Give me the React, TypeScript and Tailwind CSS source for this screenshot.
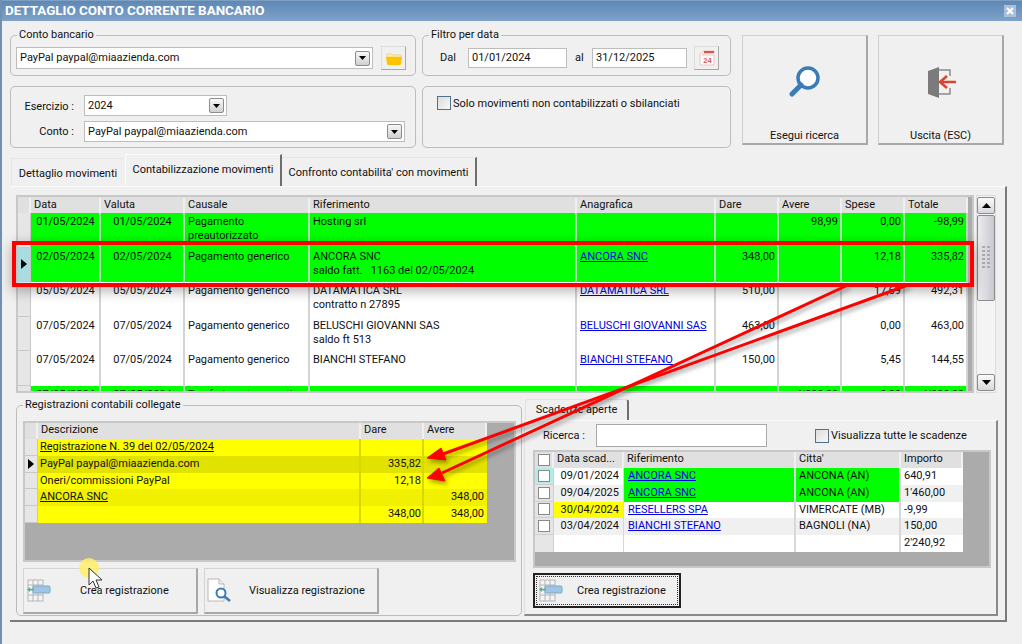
import React from "react";

type MainRow = {
  data: string;
  valuta: string;
  causale: string;
  rif: string[];
  ana?: string;
  dare?: string;
  avere?: string;
  spese?: string;
  totale?: string;
  green?: boolean;
  selected?: boolean;
};

const mainRows: MainRow[] = [
  { data: "01/05/2024", valuta: "01/05/2024", causale: "Pagamento preautorizzato", rif: ["Hosting srl"], avere: "98,99", spese: "0,00", totale: "-98,99", green: true },
  { data: "02/05/2024", valuta: "02/05/2024", causale: "Pagamento generico", rif: ["ANCORA SNC", "saldo fatt.   1163 del 02/05/2024"], ana: "ANCORA SNC", dare: "348,00", spese: "12,18", totale: "335,82", green: true, selected: true },
  { data: "05/05/2024", valuta: "05/05/2024", causale: "Pagamento generico", rif: ["DATAMATICA SRL", "contratto n 27895"], ana: "DATAMATICA SRL", dare: "510,00", spese: "17,69", totale: "492,31" },
  { data: "07/05/2024", valuta: "07/05/2024", causale: "Pagamento generico", rif: ["BELUSCHI GIOVANNI SAS", "saldo ft 513"], ana: "BELUSCHI GIOVANNI SAS", dare: "463,00", spese: "0,00", totale: "463,00" },
  { data: "07/05/2024", valuta: "07/05/2024", causale: "Pagamento generico", rif: ["BIANCHI STEFANO"], ana: "BIANCHI STEFANO", dare: "150,00", spese: "5,45", totale: "144,55" },
  { data: "07/05/2024", valuta: "07/05/2024", causale: "Trasferimento a conti", rif: [""], avere: "1'000,00", spese: "0,00", totale: "1'000,00", green: true },
];

const regRows = [
  { d: "Registrazione N. 39 del 02/05/2024", u: true, bg: "bg-[#ffff00]" },
  { d: "PayPal paypal@miaazienda.com", dare: "335,82", bg: "bg-[#e2e200]", sel: true },
  { d: "Oneri/commissioni PayPal", dare: "12,18", bg: "bg-[#ffff00]" },
  { d: "ANCORA SNC", u: true, avere: "348,00", bg: "bg-[#f0f000]" },
  { d: "", dare: "348,00", avere: "348,00", bg: "bg-[#ffff00]" },
];

const scadRows = [
  { data: "09/01/2024", rif: "ANCORA SNC", citta: "ANCONA (AN)", imp: "640,91", bg: "bg-white", dateBg: "bg-white", green: true, ind: "bg-[#b4ecec]" },
  { data: "09/04/2025", rif: "ANCORA SNC", citta: "ANCONA (AN)", imp: "1'460,00", bg: "bg-[#f0f0f0]", dateBg: "bg-[#f0f0f0]", green: true, ind: "bg-[#e4e4e4]" },
  { data: "30/04/2024", rif: "RESELLERS SPA", citta: "VIMERCATE (MB)", imp: "-9,99", bg: "bg-white", dateBg: "bg-[#ffff00]", green: false, ind: "bg-[#e4e4e4]" },
  { data: "03/04/2024", rif: "BIANCHI STEFANO", citta: "BAGNOLI (NA)", imp: "150,00", bg: "bg-[#f0f0f0]", dateBg: "bg-[#f0f0f0]", green: false, ind: "bg-[#e4e4e4]" },
];

const DropArrow = () => (
  <span className="flex h-[15px] w-[15px] shrink-0 items-center justify-center rounded-[2px] border border-[#8c8c8c] bg-gradient-to-b from-[#f8f8f8] to-[#d0d0d4]">
    <svg width="7" height="4" viewBox="0 0 7 4"><path d="M0 0h7L3.5 4z" fill="#000" /></svg>
  </span>
);

const Combo = ({ text, className }: { text: string; className: string }) => (
  <div className={`flex items-center justify-between border border-[#bdbdbd] bg-white pl-[3px] pr-[2px] ${className}`}>
    <span>{text}</span>
    <DropArrow />
  </div>
);

const Check = ({ className = "" }: { className?: string }) => (
  <span className={`block h-[12px] w-[12px] border border-[#8a8a8a] bg-white ${className}`} />
);

const BlueCheck = () => (
  <span className="block h-[14px] w-[14px] shrink-0 border border-[#54718c] bg-gradient-to-br from-[#dcdcdc] to-[#f8f8f8]" />
);

const Grid24 = () => (
  <svg width="25" height="24" viewBox="0 0 25 24" className="shrink-0">
    <rect x="1" y="1" width="15" height="21" fill="#f4f4f4" stroke="#b5b5b5" />
    <path d="M1 6h15M1 11h15M1 16h15M6 1v21M11 1v21" stroke="#b5b5b5" />
    <rect x="6" y="7" width="17" height="7" rx="1" fill="#9cc6e4" stroke="#7fa9c8" />
    <path d="M1 10.5h6" stroke="#5bb08a" strokeWidth="1.5" />
    <path d="M0 10.5l3-2.5v5z" fill="#5bb08a" />
  </svg>
);

const DocLens = () => (
  <svg width="25" height="25" viewBox="0 0 25 25" className="shrink-0">
    <path d="M1 1h11l5 5v17H1z" fill="#fff" stroke="#b8b8b8" />
    <path d="M12 1v5h5" fill="#eee" stroke="#b8b8b8" />
    <circle cx="14" cy="15" r="4.5" fill="#fff" stroke="#3a7cb6" strokeWidth="2" />
    <path d="M17.5 18.5L23 23" stroke="#3a7cb6" strokeWidth="2.5" />
  </svg>
);

const Group = ({ label, className, inner, children }: { label: string; className: string; inner?: string; children: React.ReactNode }) => (
  <fieldset className={`rounded-[5px] border border-[#bcbcbc] ${className}`}>
    <legend className="ml-[6px] px-[2px] leading-[14px]">{label}</legend>
    <div className={inner}>{children}</div>
  </fieldset>
);

const Box = ({ className, children }: { className: string; children?: React.ReactNode }) => (
  <div className={`rounded-[5px] border border-[#bcbcbc] ${className}`}>{children}</div>
);

const HCell = ({ children }: { children?: React.ReactNode }) => (
  <div className="truncate border-r-2 border-[#f0f0f0] pl-[3px]">{children}</div>
);

const MainCell = ({ green, right, children }: { green?: boolean; right?: boolean; children?: React.ReactNode }) => (
  <div className={`overflow-hidden whitespace-nowrap border-r-2 pl-[3px] pr-[2px] pt-[2px] ${green ? "border-[#b4dcb4] bg-[#00ff00]" : "border-[#d4d4d4] bg-white"} ${right ? "text-right" : ""}`}>
    {children}
  </div>
);

const Link = ({ children }: { children: React.ReactNode }) => (
  <span className="text-[#0000e0] underline">{children}</span>
);

export default function App() {
  return (
    <div className="relative h-[644px] w-[1022px] overflow-hidden border-l-2 border-[#6f8fb3] bg-[#f0f0f0] font-['Roboto',sans-serif] text-[11px] leading-[14px] text-[#111]">
      {/* title bar */}
      <div className="-ml-[2px] flex h-[21px] items-center justify-between border-t border-[#7f9fc0] bg-gradient-to-b from-[#5e88b6] to-[#7fa2c8] pl-[5px] pr-[6px]">
        <span className="text-[13.4px] font-bold text-white">DETTAGLIO CONTO CORRENTE BANCARIO</span>
        <span className="flex h-[12px] w-[12px] items-center justify-center bg-[#a9c0da]">
          <svg width="8" height="8" viewBox="0 0 8 8"><path d="M1 1l6 6M7 1L1 7" stroke="#fff" strokeWidth="2" /></svg>
        </span>
      </div>

      {/* top filters */}
      <div className="flex h-[133px] pl-[8px] pt-[7px]">
        <div className="flex w-[406px] flex-col gap-[10px]">
          <Group label="Conto bancario" className="h-[48px]" inner="flex h-[32px] items-center pl-[5px]">
            <Combo text="PayPal paypal@miaazienda.com" className="h-[22px] w-[357px]" />
            <button className="ml-[8px] flex h-[24px] w-[25px] items-center justify-center border border-[#dcdcdc] border-b-[#a8a8a8] border-r-[#a8a8a8]">
              <svg width="16" height="13" viewBox="0 0 16 13">
                <path d="M1 3a1 1 0 011-1h4l1 1h7a1 1 0 011 1v1H1z" fill="#fff2b0" stroke="#f0c040" strokeWidth=".6" />
                <path d="M0 5h16l-1 7a1 1 0 01-1 1H2a1 1 0 01-1-1z" fill="#ffc400" />
              </svg>
            </button>
          </Group>
          <Box className="flex h-[62px] flex-col gap-[5px] pt-[8px]">
            <div className="flex items-center">
              <span className="mr-[10px] w-[63px] pt-[2px] text-right">Esercizio :</span>
              <Combo text="2024" className="h-[21px] w-[143px]" />
            </div>
            <div className="flex items-center">
              <span className="mr-[10px] w-[63px] text-right">Conto :</span>
              <Combo text="PayPal paypal@miaazienda.com" className="h-[21px] w-[321px]" />
            </div>
          </Box>
        </div>

        <div className="ml-[6px] flex w-[309px] flex-col gap-[10px]">
          <Group label="Filtro per data" className="h-[48px]" inner="flex h-[32px] items-center pl-[17px]">
            <span className="w-[28px]">Dal</span>
            <div className="flex h-[20px] w-[99px] items-center border border-[#bdbdbd] bg-white pl-[3px]">01/01/2024</div>
            <span className="ml-[8px] w-[17px]">al</span>
            <div className="flex h-[20px] w-[95px] items-center border border-[#bdbdbd] bg-white pl-[3px]">31/12/2025</div>
            <button className="ml-[7px] flex h-[24px] w-[25px] items-center justify-center border border-[#dcdcdc] border-b-[#a8a8a8] border-r-[#a8a8a8]">
              <svg width="16" height="16" viewBox="0 0 16 16">
                <path d="M1 15V4l4-3h10v2H6L3 5h12v10z" fill="#fff" stroke="#e8b0a8" strokeWidth=".7" />
                <path d="M5 1h10v2H5z" fill="#d9534a" />
                <text x="8.5" y="13" fontSize="7.5" fontWeight="700" textAnchor="middle" fill="#e0564c" fontFamily="Liberation Sans, sans-serif">24</text>
              </svg>
            </button>
          </Group>
          <Box className="flex h-[62px] items-start pl-[14px] pt-[9px]">
            <BlueCheck />
            <span className="ml-[2px] pt-[1px]">Solo movimenti non contabilizzati o sbilanciati</span>
          </Box>
        </div>

        <button className="ml-[11px] mt-[7px] flex h-[110px] w-[126px] flex-col items-center justify-between border border-[#cfcfcf] border-b-2 border-r-2 border-b-[#a8a8a8] border-r-[#a8a8a8] pt-[29px]">
          <svg width="32" height="32" viewBox="0 0 32 32">
            <circle cx="19" cy="13" r="10" fill="#fff" stroke="#3a7cb6" strokeWidth="3.5" />
            <path d="M12 20L3 29" stroke="#3a7cb6" strokeWidth="5" strokeLinecap="round" />
          </svg>
          <span>Esegui ricerca</span>
        </button>
        <button className="ml-[10px] mt-[7px] flex h-[110px] w-[126px] flex-col items-center justify-between border border-[#cfcfcf] border-b-2 border-r-2 border-b-[#a8a8a8] border-r-[#a8a8a8] pt-[30px]">
          <svg width="30" height="33" viewBox="0 0 30 33" className="ml-[2px]">
            <path d="M10 4h13v6M23 22v6H10" fill="none" stroke="#8a8a8a" strokeWidth="1.5" />
            <path d="M1 5l11-4v31L1 28z" fill="#7b7b7b" />
            <path d="M15 16h14" stroke="#d9442e" strokeWidth="2.5" />
            <path d="M20 10l-7 6 7 6" fill="none" stroke="#d9442e" strokeWidth="2.5" />
          </svg>
          <span>Uscita (ESC)</span>
        </button>
      </div>

      {/* tabs */}
      <div className="ml-[9px] flex h-[32px] items-end whitespace-nowrap">
        <div className="flex h-[28px] w-[113px] items-center justify-center border-l border-t border-[#e6e6e6] pt-[2px]">Dettaglio movimenti</div>
        <div className="ml-[1px] flex h-[32px] w-[157px] items-center justify-center border-l border-r-2 border-t border-[#fafafa] border-r-[#6e6e6e] pb-[1px]">Contabilizzazione movimenti</div>
        <div className="flex h-[29px] w-[195px] items-center justify-center border-r-2 border-t border-[#e6e6e6] border-r-[#6e6e6e] pt-[1px]">Confronto contabilita' con movimenti</div>
      </div>

      {/* main panel */}
      <div className="ml-[8px] h-[436px] w-[997px] border-b-2 border-r-2 border-t border-b-[#7a7a7a] border-r-[#7a7a7a] border-t-[#fafafa] pl-[6px] pt-[8px]">
        <div className="flex h-[198px]">
          <div className="h-[198px] w-[958px] overflow-hidden border-2 border-[#c8c8c8] bg-[#ababab]">
            <div className="grid h-[16px] w-[950px] grid-cols-[13px_70px_84px_125px_267px_139px_63px_63px_63px_63px] bg-[#e0e0e0] pt-[1px]">
              <HCell />
              <HCell>Data</HCell>
              <HCell>Valuta</HCell>
              <HCell>Causale</HCell>
              <HCell>Riferimento</HCell>
              <HCell>Anagrafica</HCell>
              <HCell>Dare</HCell>
              <HCell>Avere</HCell>
              <HCell>Spese</HCell>
              <HCell>Totale</HCell>
            </div>
            {mainRows.map((r, i) => (
              <div key={i} className="grid h-[34.5px] w-[950px] grid-cols-[13px_70px_84px_125px_267px_139px_63px_63px_63px_63px]">
                <div className={`flex items-center justify-center border-b border-r border-[#c8c8c8] ${r.selected ? "bg-[#a8dce0]" : "bg-[#e6e6e6]"}`}>
                  {r.selected && <svg width="6" height="10" viewBox="0 0 6 10"><path d="M0 0l6 5-6 5z" fill="#000" /></svg>}
                </div>
                <MainCell green={r.green}><div className="text-center">{r.data}</div></MainCell>
                <MainCell green={r.green}><div className="text-center">{r.valuta}</div></MainCell>
                <MainCell green={r.green}><div className="whitespace-normal">{r.causale}</div></MainCell>
                <MainCell green={r.green}>
                  <div className="whitespace-pre">{r.rif.join("\n")}</div>
                </MainCell>
                <MainCell green={r.green}>{r.ana && <Link>{r.ana}</Link>}</MainCell>
                <MainCell green={r.green} right>{r.dare}</MainCell>
                <MainCell green={r.green} right>{r.avere}</MainCell>
                <MainCell green={r.green} right>{r.spese}</MainCell>
                <MainCell green={r.green} right>{r.totale}</MainCell>
              </div>
            ))}
          </div>
          {/* scrollbar */}
          <div className="ml-[2px] flex h-[198px] w-[20px] flex-col border border-[#dcdcdc] bg-[#f4f4f4] py-[1px]">
            <div className="flex h-[17px] shrink-0 items-center justify-center rounded-[2px] border border-[#8c8c8c] bg-gradient-to-b from-[#fafafa] to-[#d8d8dc]">
              <svg width="9" height="5" viewBox="0 0 9 5"><path d="M4.5 0L9 5H0z" fill="#000" /></svg>
            </div>
            <div className="mt-[1px] flex h-[86px] shrink-0 items-center justify-center rounded-[2px] border border-[#8c8c8c] bg-gradient-to-r from-[#ececf0] to-[#c8c8d0]">
              <svg width="8" height="24" viewBox="0 0 8 24">
                {[1, 5, 9, 13, 17, 21].map((y) => (
                  <path key={y} d={`M0 ${y}h3M5 ${y}h3`} stroke="#9c9ca4" strokeWidth="1.5" />
                ))}
              </svg>
            </div>
            <div className="flex-1" />
            <div className="flex h-[17px] shrink-0 items-center justify-center rounded-[2px] border border-[#8c8c8c] bg-gradient-to-b from-[#fafafa] to-[#d8d8dc]">
              <svg width="9" height="5" viewBox="0 0 9 5"><path d="M0 0h9L4.5 5z" fill="#000" /></svg>
            </div>
          </div>
        </div>

        <div className="mt-[5px] flex">
          {/* registrazioni */}
          <Group label="Registrazioni contabili collegate" className="h-[218px] w-[506px]" inner="pl-[6px]">
            <div className="mt-[9px] h-[141px] w-[493px] border-2 border-[#c8c8c8] bg-[#ababab]">
              <div className="grid h-[16px] w-[462px] grid-cols-[13px_323px_63px_63px] bg-[#e0e0e0]">
                <HCell />
                <HCell>Descrizione</HCell>
                <HCell>Dare</HCell>
                <HCell>Avere</HCell>
              </div>
              {regRows.map((r, i) => (
                <div key={i} className={`grid h-[16.8px] w-[462px] grid-cols-[13px_323px_63px_63px] ${r.bg}`}>
                  <div className="flex items-center justify-center border-b border-r border-[#c8c8c8] bg-[#e6e6e6]">
                    {r.sel && <svg width="6" height="10" viewBox="0 0 6 10"><path d="M0 0l6 5-6 5z" fill="#000" /></svg>}
                  </div>
                  <div className={`border-r-2 border-[#d8d800] pl-[2px] pt-[1px] ${r.u ? "underline" : ""}`}>{r.d}</div>
                  <div className="border-r-2 border-[#d8d800] pr-[1px] pt-[1px] text-right">{r.dare}</div>
                  <div className="pr-[3px] pt-[1px] text-right">{r.avere}</div>
                </div>
              ))}
            </div>
            <div className="mt-[6px] flex gap-[6px]">
              <button className="flex h-[46px] w-[175px] items-center border border-[#d4d4d4] border-b-2 border-r-2 border-b-[#a8a8a8] border-r-[#a8a8a8] pl-[3px]">
                <Grid24 />
                <span className="ml-[28px]">Crea registrazione</span>
              </button>
              <button className="flex h-[46px] w-[175px] items-center border border-[#d4d4d4] border-b-2 border-r-2 border-b-[#a8a8a8] border-r-[#a8a8a8] pl-[2px]">
                <DocLens />
                <span className="ml-[17px]">Visualizza registrazione</span>
              </button>
            </div>
          </Group>

          {/* scadenze */}
          <div className="ml-[2px] mt-[1px] w-[474px]">
            <div className="ml-[1px] flex h-[21px] w-[104px] items-center justify-center rounded-t-[3px] border-l border-r-2 border-t border-[#e0e0e0] border-r-[#6e6e6e]">Scadenze aperte</div>
            <div className="h-[196px] border-b-2 border-l border-r-2 border-t border-b-[#8a8a8a] border-l-[#e0e0e0] border-r-[#8a8a8a] border-t-[#fafafa] pl-[8px] pt-[3px]">
              <div className="flex h-[23px] items-center">
                <span className="ml-[10px] w-[53px]">Ricerca :</span>
                <div className="h-[23px] w-[171px] border border-[#a8a8a8] bg-white" />
                <span className="ml-[48px]"><BlueCheck /></span>
                <span className="ml-[2px]">Visualizza tutte le scadenze</span>
              </div>
              <div className="mt-[3px] h-[118px] w-[458px] border-2 border-[#c8c8c8] bg-[#ababab]">
                <div className="grid h-[16px] w-[428px] grid-cols-[19px_70px_172px_105px_62px] bg-[#e0e0e0]">
                  <div className="flex items-center justify-center border-r-2 border-[#f0f0f0]"><Check /></div>
                  <HCell>Data scad...</HCell>
                  <HCell>Riferimento</HCell>
                  <HCell>Citta'</HCell>
                  <HCell>Importo</HCell>
                </div>
                {scadRows.map((r, i) => (
                  <div key={i} className={`grid h-[16.8px] w-[428px] grid-cols-[19px_70px_172px_105px_62px] ${r.bg}`}>
                    <div className={`flex items-center justify-center border-b border-r border-[#d0d0d0] ${r.ind}`}><Check /></div>
                    <div className={`border-r border-[#d8d8d8] pr-[4px] pt-[1px] text-right ${r.dateBg}`}>{r.data}</div>
                    <div className={`border-r-2 border-[#d8d8d8] pl-[4px] pt-[1px] ${r.green ? "bg-[#00ff00]" : ""}`}><Link>{r.rif}</Link></div>
                    <div className={`border-r-2 border-[#d8d8d8] pl-[3px] pt-[1px] ${r.green ? "bg-[#00ff00]" : ""}`}>{r.citta}</div>
                    <div className="pl-[3px] pt-[1px]">{r.imp}</div>
                  </div>
                ))}
                <div className="grid h-[16.8px] w-[428px] grid-cols-[19px_70px_172px_105px_62px] bg-white">
                  <div className="border-r border-[#d0d0d0] bg-[#e6e6e6]" />
                  <div className="border-r border-[#d8d8d8]" />
                  <div className="border-r-2 border-[#d8d8d8]" />
                  <div className="border-r-2 border-[#d8d8d8]" />
                  <div className="pl-[3px] pt-[1px]">2'240,92</div>
                </div>
              </div>
              <button className="mt-[5px] flex h-[35px] w-[148px] items-center border-2 border-[#222] p-[1px]">
                <span className="flex h-full w-full items-center border border-dotted border-[#333] pl-[2px]">
                  <Grid24 />
                  <span className="ml-[13px]">Crea registrazione</span>
                </span>
              </button>
            </div>
          </div>
        </div>
      </div>

      {/* annotations drawn over the window */}
      <div className="pointer-events-none absolute left-[10px] top-[241px] h-[46px] w-[962px] border-4 border-[#ff0000] shadow-[0_4px_12px_rgba(0,0,0,0.3)]" />
      <svg className="pointer-events-none absolute left-[-2px] top-0" width="1022" height="644" viewBox="0 0 1022 644">
        <g style={{ filter: "drop-shadow(2px 3px 2px rgba(0,0,0,0.35))" }} fill="#ff0000" stroke="#ff0000">
          <path d="M848 285L442 473" strokeWidth="3" />
          <path d="M908 285L443 454" strokeWidth="3" />
          <path d="M427 478L439 468L445 481z" strokeWidth="1" />
          <path d="M427 458L441 448L446 460z" strokeWidth="1" />
        </g>
        <circle cx="89" cy="568" r="10" fill="#fff06a" opacity="0.85" />
        <path d="M89 568v17l4-4 3 7 3-1-3-7h6z" fill="#fff" stroke="#333" strokeWidth="1" />
      </svg>
    </div>
  );
}
